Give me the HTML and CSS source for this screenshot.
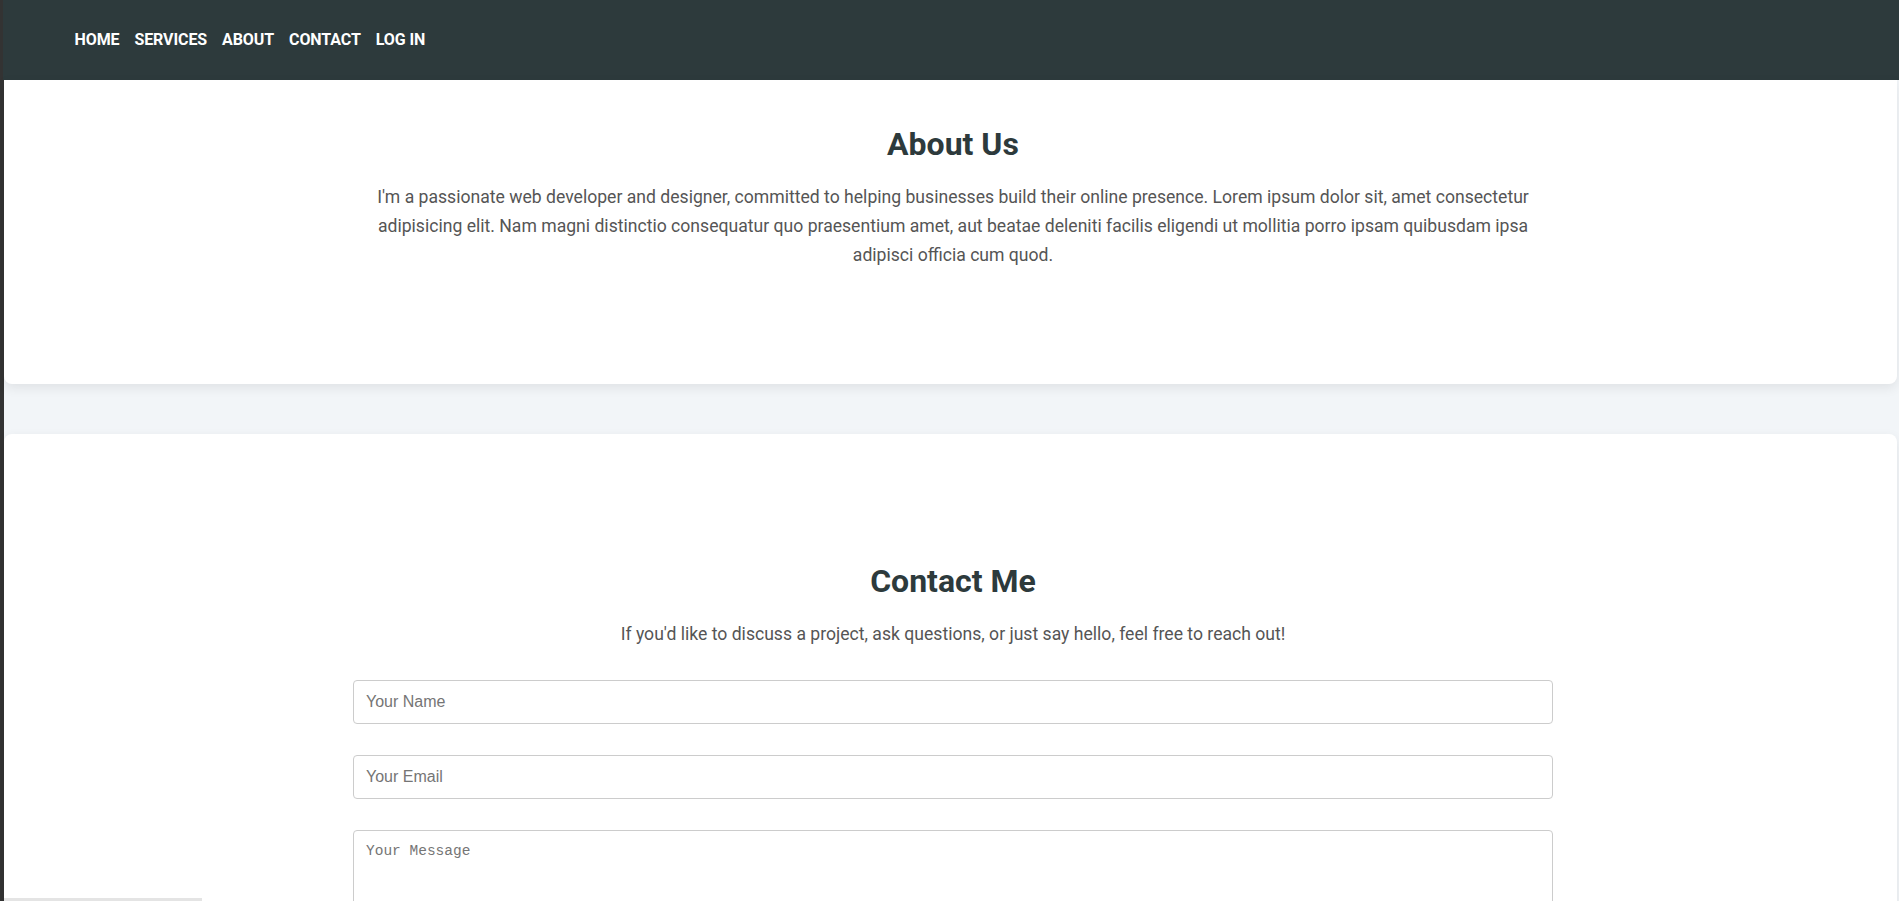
FILE: index.html
```html
<!DOCTYPE html>
<html lang="en">
<head>
<meta charset="utf-8">
<title>Portfolio</title>
<link rel="stylesheet" href="styles.css">
</head>
<body>
<div class="page">
  <header class="site-header">
    <nav class="nav">
      <a href="#" class="nav-link">HOME</a>
      <a href="#" class="nav-link">SERVICES</a>
      <a href="#" class="nav-link">ABOUT</a>
      <a href="#" class="nav-link">CONTACT</a>
      <a href="#" class="nav-link">LOG IN</a>
    </nav>
  </header>
  <main class="main">
    <section class="card about">
      <h2 class="section-title">About Us</h2>
      <p class="section-text about-text">I'm a passionate web developer and designer, committed to helping businesses build their online presence. Lorem ipsum dolor sit, amet consectetur adipisicing elit. Nam magni distinctio consequatur quo praesentium amet, aut beatae deleniti facilis eligendi ut mollitia porro ipsam quibusdam ipsa adipisci officia cum quod.</p>
    </section>
    <section class="card contact">
      <h2 class="section-title">Contact Me</h2>
      <p class="section-text contact-text">If you'd like to discuss a project, ask questions, or just say hello, feel free to reach out!</p>
      <form class="contact-form">
        <input class="field" type="text" placeholder="Your Name">
        <input class="field" type="email" placeholder="Your Email">
        <textarea class="field message" placeholder="Your Message"></textarea>
      </form>
    </section>
  </main>
  <div class="corner-bar"></div>
</div>
</body>
</html>
```

FILE: styles.css
```css
html, body {
  margin: 0;
  padding: 0;
}
body {
  background: #333333;
  font-family: Roboto, "Liberation Sans", Arial, sans-serif;
  overflow: hidden;
}
.page {
  margin-left: 4px;
  background: #f2f5f8;
  min-height: 100vh;
}
.site-header {
  background: #2d3a3c;
  height: 80px;
  display: flex;
  align-items: center;
  padding-left: 64px;
  padding-bottom: 2px;
  box-sizing: border-box;
  margin-left: -1px;
}
.nav {
  display: flex;
  gap: 0;
}
.nav-link {
  color: #ffffff;
  text-decoration: none;
  font-weight: 700;
  font-size: 16px;
  padding: 0 7.5px;
  letter-spacing: -0.1px;
}
.main {
  display: flex;
  flex-direction: column;
  gap: 50px;
}
.card {
  background: #ffffff;
  margin-right: 2px;
  padding-left: 5px;
  box-shadow: 0 4px 12px rgba(0, 0, 0, 0.08);
  display: flex;
  flex-direction: column;
  align-items: center;
}
.about {
  border-radius: 0 0 8px 8px;
  padding-top: 45px;
  height: 259px;
}
.contact {
  border-radius: 8px 8px 0 0;
  padding-top: 128px;
  min-height: 600px;
}
.section-title {
  margin: 0;
  font-size: 32px;
  line-height: 38px;
  font-weight: 700;
  color: #2d3a3c;
}
.section-text {
  margin: 19px 0 0;
  font-size: 17.6px;
  line-height: 29px;
  color: #555555;
  text-align: center;
  max-width: 1200px;
}
.about-text {
  margin-top: 20px;
}
.contact-text {
  margin-top: 20px;
}
.contact-form {
  width: 1200px;
  margin-top: 31px;
  display: flex;
  flex-direction: column;
  gap: 31px;
}
.field {
  box-sizing: border-box;
  width: 100%;
  height: 44px;
  border: 1px solid #cccccc;
  border-radius: 4px;
  padding: 0 12px;
  font-family: "Liberation Sans", Arial, sans-serif;
  font-size: 16px;
  color: #333;
  background: #fff;
}
.field::placeholder {
  color: #757575;
}
.message {
  height: 150px;
  padding: 12px 12px;
  font-family: "Liberation Mono", "DejaVu Sans Mono", monospace;
  font-size: 14.5px;
  resize: none;
}
.corner-bar {
  position: fixed;
  left: 4px;
  bottom: 0;
  width: 198px;
  height: 3px;
  background: #e4e4e4;
}
```
